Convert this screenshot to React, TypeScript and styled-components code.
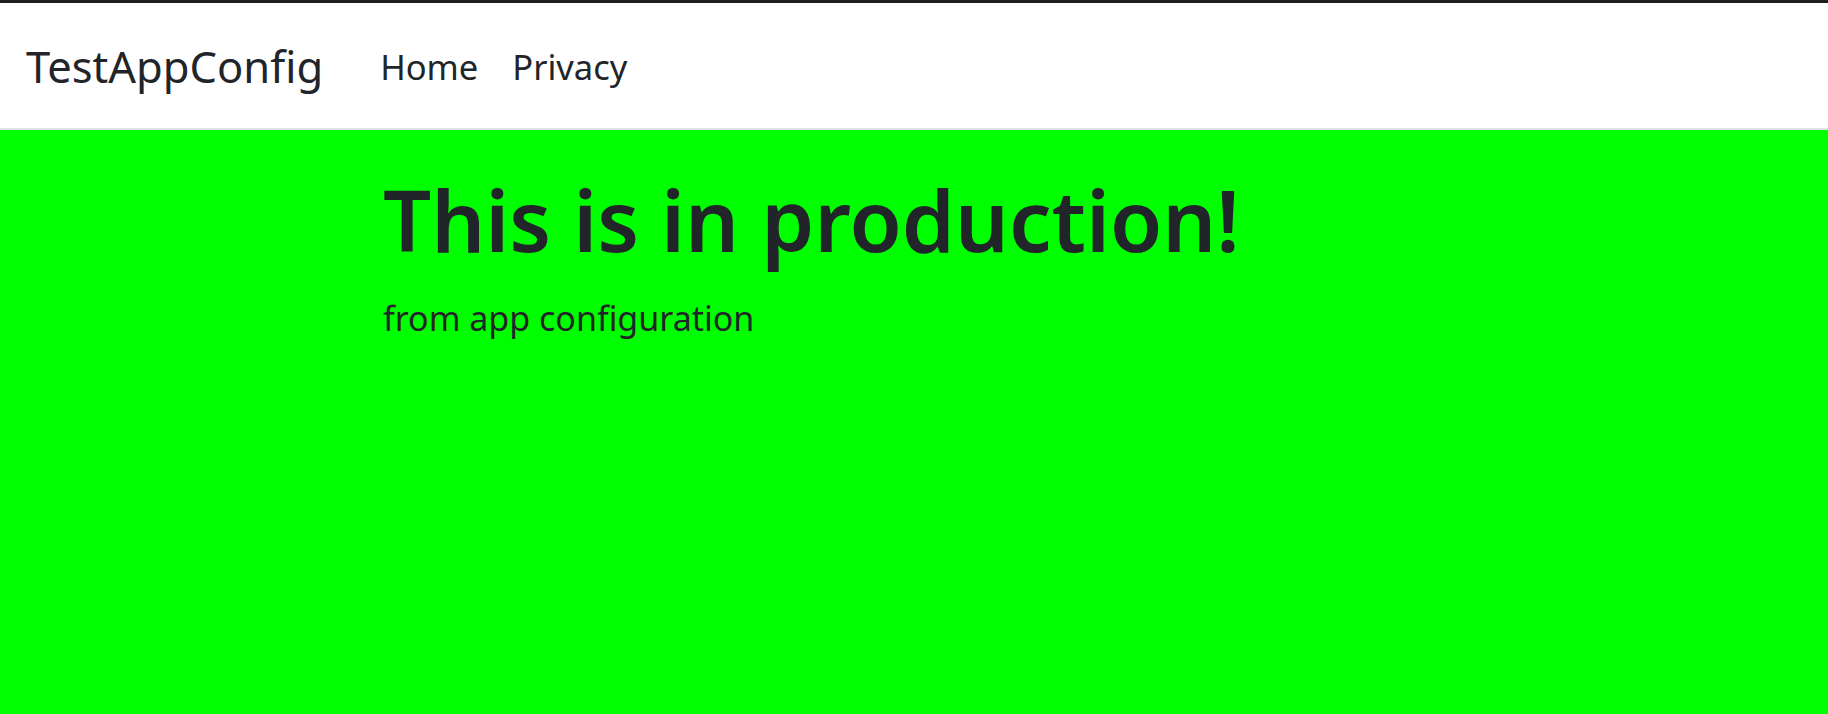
import React from "react";
import styled, { createGlobalStyle } from "styled-components";

const GlobalStyle = createGlobalStyle`
  html, body { margin: 0; padding: 0; }
  body {
    font-family: "Noto Sans", "Open Sans", sans-serif;
    color: #212529;
    background: #00ff00;
    min-height: 714px;
  }
`;

const Page = styled.div`
  display: flex;
  flex-direction: column;
  min-height: 714px;
  border-top: 3px solid #1e1e1e;
  box-sizing: border-box;
`;

const NavBar = styled.header`
  display: flex;
  align-items: center;
  gap: 57px;
  box-sizing: border-box;
  height: 127px;
  padding: 33px 26px 32px;
  background: #ffffff;
  border-bottom: 2px solid #dee2e6;
`;

const Brand = styled.a`
  font-size: 43.5px;
  line-height: 60px;
  font-weight: 400;
  color: #212529;
  text-decoration: none;
  white-space: nowrap;
`;

const NavList = styled.nav`
  display: flex;
  align-items: center;
  gap: 34px;
`;

const NavLink = styled.a`
  font-size: 34.5px;
  line-height: 60px;
  margin-top: 2px;
  color: #212529;
  text-decoration: none;
  white-space: nowrap;
`;

const Main = styled.main`
  flex: 1;
  background: #00ff00;
  padding-top: 38px;
`;

const Container = styled.div`
  max-width: 1062px;
  margin: 0 auto;
`;

const Heading = styled.h1`
  margin: 0;
  font-size: 84.8px;
  font-weight: 600;
  line-height: 102.6px;
  white-space: nowrap;
`;

const Lead = styled.p`
  margin: 22px 0 0;
  font-size: 34px;
  font-weight: 400;
  line-height: 51px;
`;

export default function App() {
  return (
    <>
      <GlobalStyle />
      <Page>
        <NavBar>
          <Brand href="#">TestAppConfig</Brand>
          <NavList>
            <NavLink href="#">Home</NavLink>
            <NavLink href="#">Privacy</NavLink>
          </NavList>
        </NavBar>
        <Main>
          <Container>
            <Heading>This is in production!</Heading>
            <Lead>from app configuration</Lead>
          </Container>
        </Main>
      </Page>
    </>
  );
}
